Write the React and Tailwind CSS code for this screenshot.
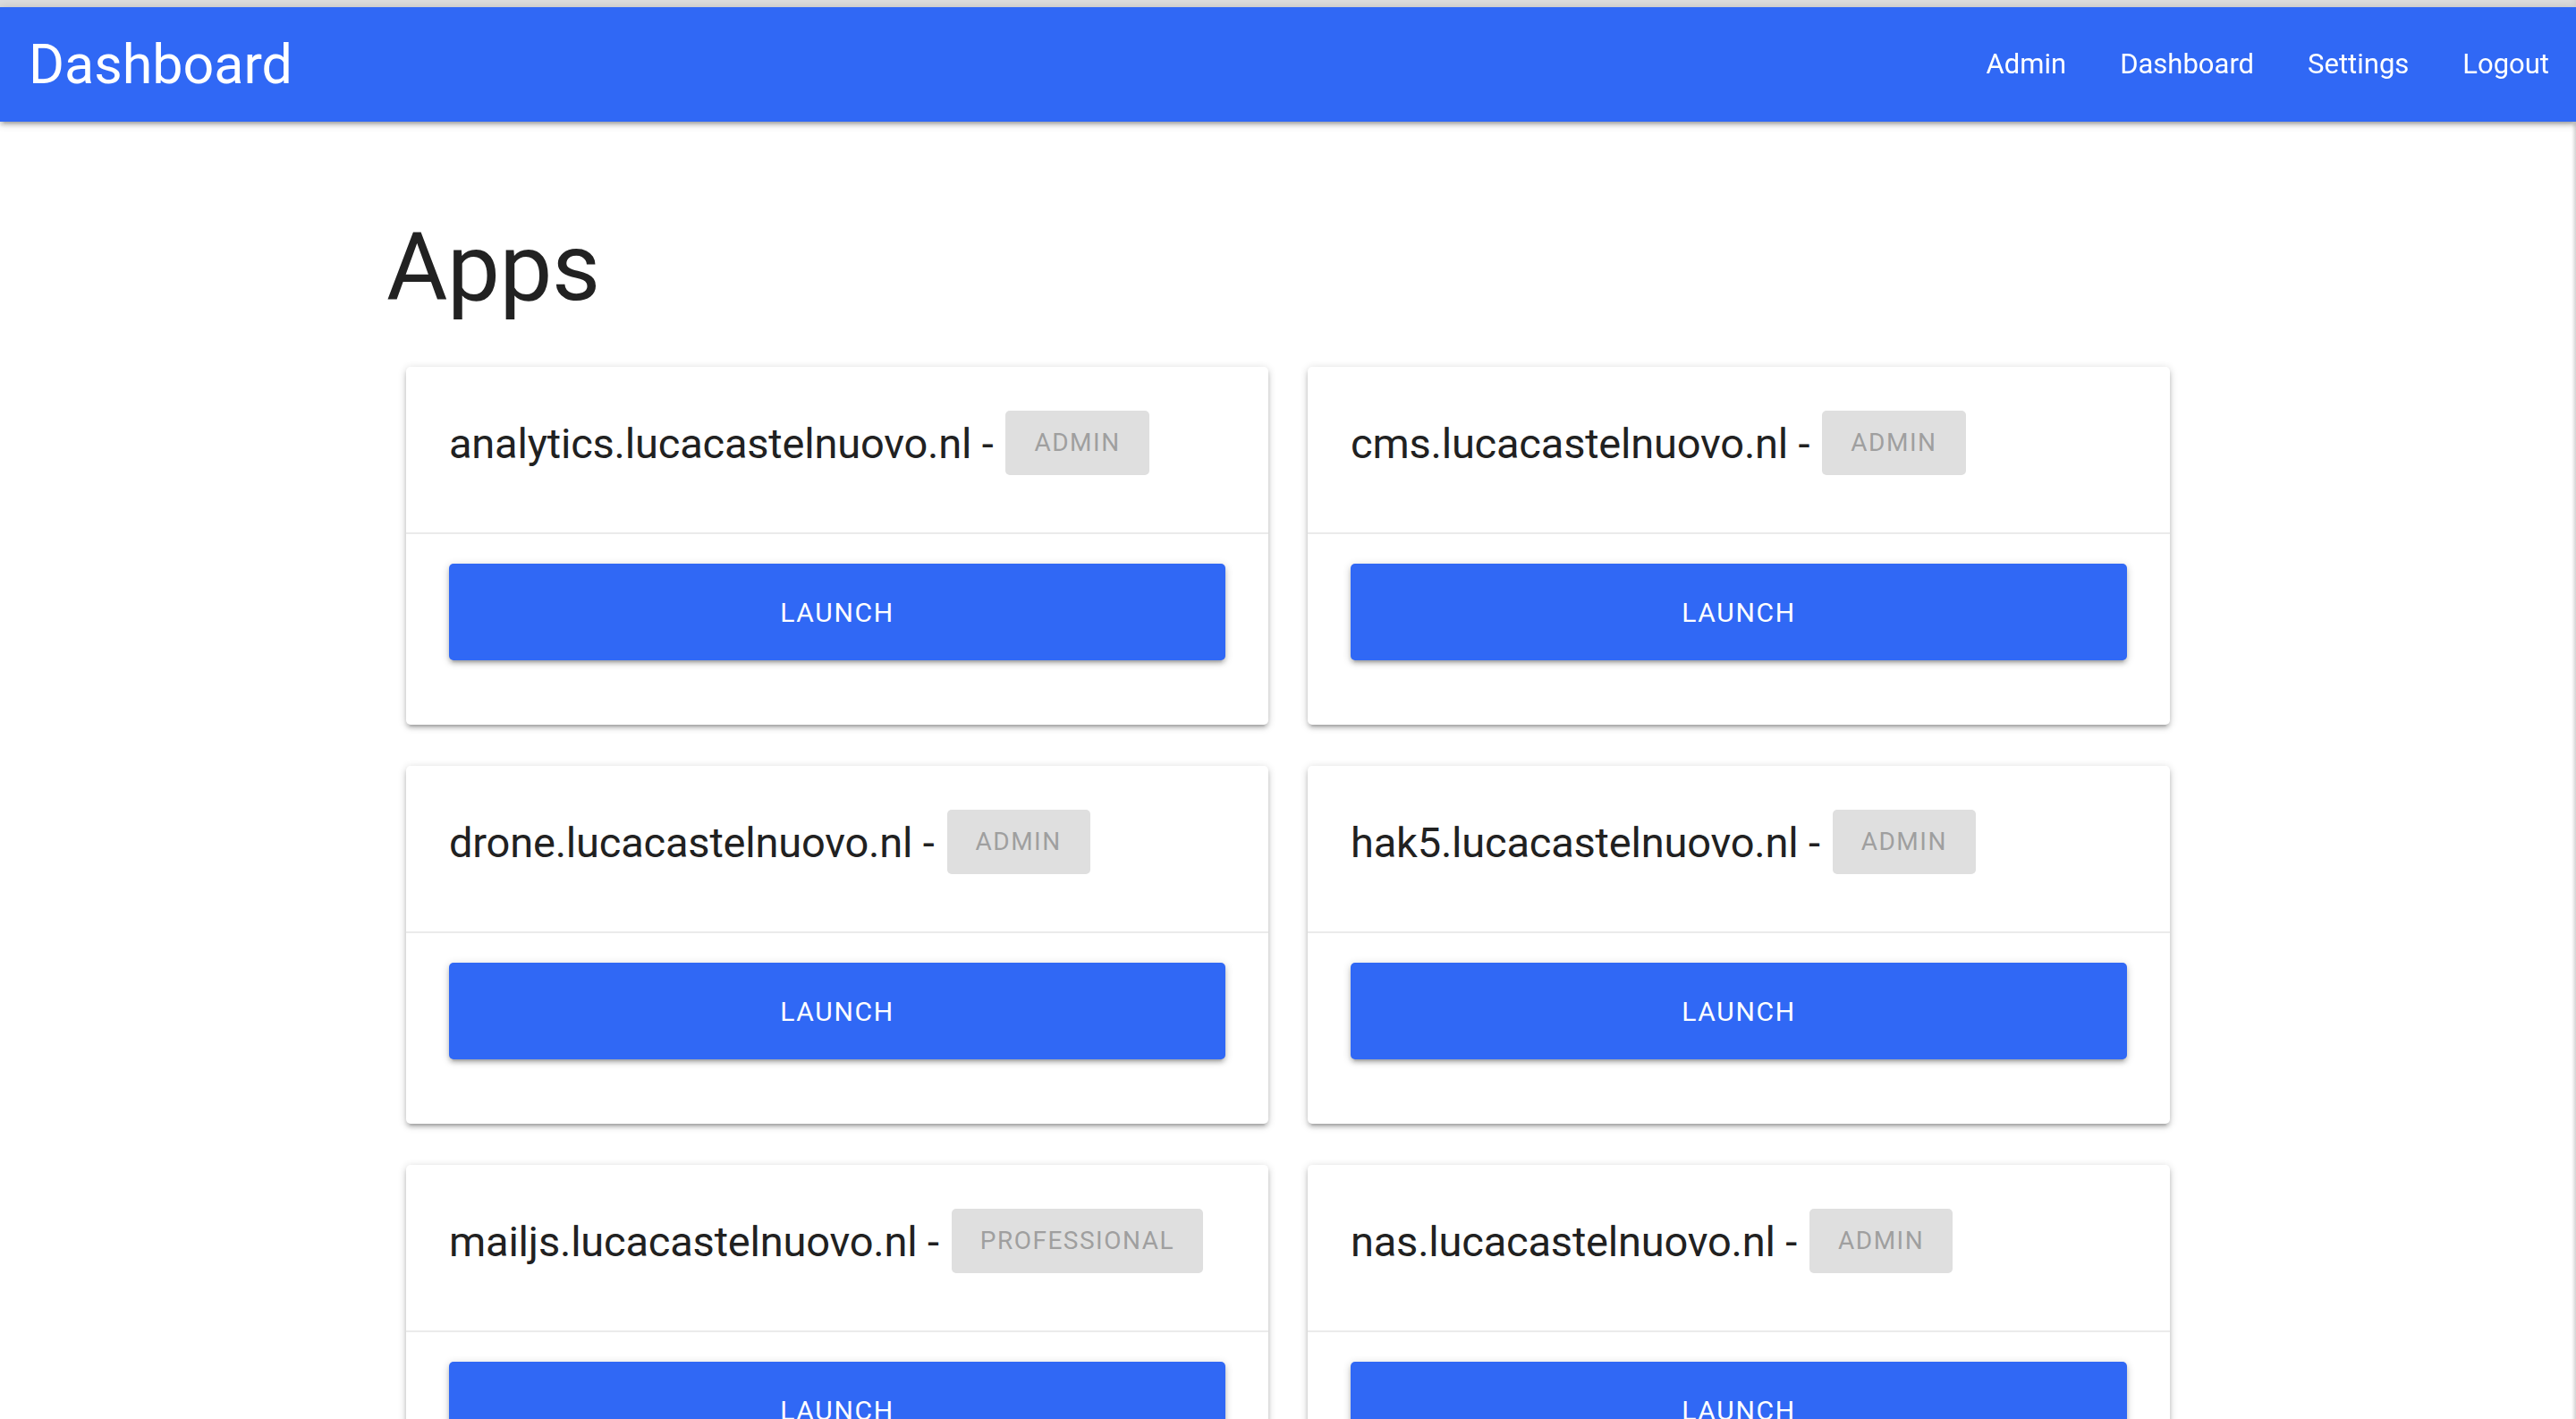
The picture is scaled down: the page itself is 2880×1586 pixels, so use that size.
import React from 'react';

const apps = [
  { host: 'analytics.lucacastelnuovo.nl', role: 'Admin' },
  { host: 'cms.lucacastelnuovo.nl', role: 'Admin' },
  { host: 'drone.lucacastelnuovo.nl', role: 'Admin' },
  { host: 'hak5.lucacastelnuovo.nl', role: 'Admin' },
  { host: 'mailjs.lucacastelnuovo.nl', role: 'Professional' },
  { host: 'nas.lucacastelnuovo.nl', role: 'Admin' },
];

const links = ['Admin', 'Dashboard', 'Settings', 'Logout'];

const AppCard = ({ app }) => (
  <div className="bg-white rounded-[5px] shadow-[0_4px_4px_0_rgba(0,0,0,0.14),0_6px_2px_-4px_rgba(0,0,0,0.12),0_2px_10px_0_rgba(0,0,0,0.2)] flex flex-col">
    {/* Title */}
    <div className="px-[48px] pt-[49px] pb-[64px] flex items-center gap-[14px]">
      <span className="text-[47px] leading-none text-[#212121] tracking-[-0.2px]">{app.host} -</span>
      <span className="h-[72px] px-[32px] rounded-[5px] bg-[#dfdfdf] text-[#9f9f9f] text-[28px] uppercase tracking-[1.5px] flex items-center">
        {app.role}
      </span>
    </div>

    {/* Action */}
    <div className="border-t-2 border-[#ebebeb] px-[48px] pt-[33px] pb-[72px]">
      <button className="w-full h-[108px] rounded-[5px] bg-[#3068f5] text-white text-[30px] uppercase tracking-[1.7px] shadow-[0_4px_4px_0_rgba(0,0,0,0.14),0_6px_2px_-4px_rgba(0,0,0,0.12),0_2px_10px_0_rgba(0,0,0,0.2)]">
        Launch
      </button>
    </div>
  </div>
);

const App = () => {
  return (
    <div className="min-h-screen bg-white font-['Roboto','Liberation_Sans',sans-serif]">
      <div className="h-[8px] bg-[#dcdcdc]" />

      {/* Navbar */}
      <nav className="relative z-10 h-[128px] bg-[#3068f5] flex items-center justify-between pl-[32px] shadow-[0_4px_4px_0_rgba(0,0,0,0.14),0_6px_2px_-4px_rgba(0,0,0,0.12),0_2px_10px_0_rgba(0,0,0,0.2)]">
        <a className="text-white text-[61px] leading-none">Dashboard</a>
        <ul className="flex items-center h-full">
          {links.map((l) => (
            <li key={l} className="h-full">
              <a className="h-full px-[30px] flex items-center text-white text-[31px]">{l}</a>
            </li>
          ))}
        </ul>
      </nav>

      {/* Side nav shadow peeking at the right edge */}
      <div className="fixed top-0 right-0 w-[5px] h-full bg-gradient-to-l from-[#d4d4d4] to-transparent" />

      {/* Content */}
      <main className="w-[2016px] mx-auto">
        <h1 className="mt-[111px] mb-[58px] text-[105px] leading-none text-[#222222] tracking-[-0.5px]">Apps</h1>

        <div className="px-[22px] grid grid-cols-2 gap-x-[44px] gap-y-[46px] pb-[60px]">
          {apps.map((app) => (
            <AppCard key={app.host} app={app} />
          ))}
        </div>
      </main>
    </div>
  );
};

export default App;
